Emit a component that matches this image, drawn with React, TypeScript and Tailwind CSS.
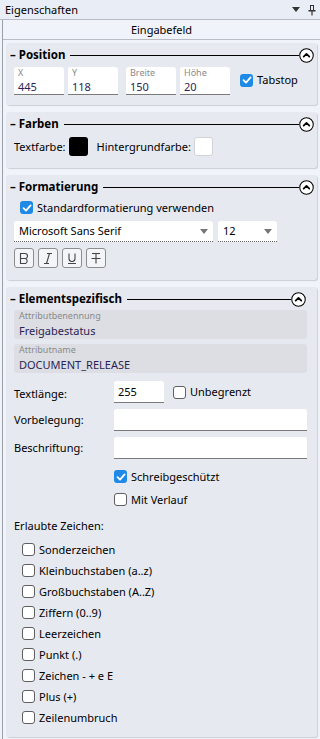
import React from 'react';

const font = "font-['Noto_Sans','Segoe_UI',sans-serif]";

function Check({ checked }: { checked?: boolean }) {
  if (checked) {
    return (
      <span className="w-[13px] h-[13px] rounded-[3px] bg-[#1e8ae6] flex items-center justify-center shrink-0">
        <svg width="10" height="10" viewBox="0 0 10 10">
          <path d="M1.5 5.2 L4 7.6 L8.6 2.4" fill="none" stroke="#fff" strokeWidth="1.8" strokeLinecap="round" strokeLinejoin="round" />
        </svg>
      </span>
    );
  }
  return <span className="w-[13px] h-[13px] rounded-[3px] border-[1.5px] border-[#5f5f5f] bg-white shrink-0" />;
}

function CheckRow({ label, checked, className }: { label: string; checked?: boolean; className?: string }) {
  return (
    <div className={`flex items-center h-[17px] gap-[4px] ${className ?? ''}`}>
      <Check checked={checked} />
      <span>{label}</span>
    </div>
  );
}

function Collapse() {
  return (
    <svg width="15" height="15" viewBox="0 0 16 16" className="shrink-0 mr-[1px]">
      <circle cx="8" cy="8" r="7.2" fill="#fff" stroke="#000" strokeWidth="1.1" />
      <path d="M5 9.3 L8 6.3 L11 9.3" fill="none" stroke="#000" strokeWidth="1.8" strokeLinecap="round" strokeLinejoin="round" />
    </svg>
  );
}

function SectionTitle({ title }: { title: string }) {
  return (
    <div className="flex items-center h-[18px]">
      <span className="font-bold text-[11.5px] mr-[5px]">– {title}</span>
      <span className="flex-1 h-px bg-black" />
      <Collapse />
    </div>
  );
}

function Section({ title, children, className }: { title: string; children: React.ReactNode; className?: string }) {
  return (
    <section className={`bg-[#e6e9f0] rounded-[3px] shadow-[1px_1px_1px_rgba(0,0,0,0.15)] pl-[4px] pr-[2px] pt-[3px] ${className ?? ''}`}>
      <SectionTitle title={title} />
      {children}
    </section>
  );
}

function NumField({ label, value }: { label: string; value: string }) {
  return (
    <div className="w-[50px] h-[28px] bg-white rounded-t-[3px] border-b border-[#7a7a7a] px-[4px]">
      <div className="text-[9px] leading-[12px] text-[#8a8a8a]">{label}</div>
      <div className="text-[11px] leading-[14px] mt-[1px] text-[#2b1f55]">{value}</div>
    </div>
  );
}

function AttrBox({ label, value, className }: { label: string; value: string; className?: string }) {
  return (
    <div className={`h-[29px] bg-[#dcdee4] rounded-[3px] px-[5px] ${className ?? ''}`}>
      <div className="text-[9px] leading-[12px] text-[#8a8a8a]">{label}</div>
      <div className="text-[11px] leading-[14px] mt-[2px] text-[#2b1f55]">{value}</div>
    </div>
  );
}

const erlaubt = [
  'Sonderzeichen',
  'Kleinbuchstaben (a..z)',
  'Großbuchstaben (A..Z)',
  'Ziffern (0..9)',
  'Leerzeichen',
  'Punkt (.)',
  'Zeichen - + e E',
  'Plus (+)',
  'Zeilenumbruch',
];

export default function App(): React.JSX.Element {
  return (
    <div className={`w-[320px] h-[739px] overflow-hidden bg-[#f0f3f9] text-[11px] leading-[14px] text-black ${font}`}>
      <div className="h-[20px] flex items-center justify-between bg-[#e9edf5] border-b border-[#b9bcc4] pl-[5px] pr-[4px]">
        <span className="text-[11px]">Eigenschaften</span>
        <div className="flex items-center gap-[8px]">
          <svg width="8" height="6" viewBox="0 0 8 6">
            <path d="M0 0 H8 L4 5 Z" fill="#333" />
          </svg>
          <svg width="8" height="12" viewBox="0 0 8 12">
            <path d="M2 1 H6 V6 H7.5 V7.5 H4.6 V11.5 H3.4 V7.5 H0.5 V6 H2 Z M3 2 V6 H5 V2 Z" fill="#333" />
          </svg>
        </div>
      </div>
      <div className="h-[719px] border-l border-[#9aa0a8] ml-[2px] flex flex-col">
        <div className="h-[20px] shrink-0 border-b border-[#b9bcc4] flex items-center justify-center">Eingabefeld</div>
        <div className="flex flex-col gap-[7px] pl-[3px] pr-[3px] pt-[3px]">
          <Section title="Position" className="h-[62px]">
            <div className="flex items-center mt-[3px] pl-[4px]">
              <NumField label="X" value="445" />
              <div className="w-[4px]" />
              <NumField label="Y" value="118" />
              <div className="w-[8px]" />
              <NumField label="Breite" value="150" />
              <div className="w-[4px]" />
              <NumField label="Höhe" value="20" />
              <CheckRow label="Tabstop" checked className="ml-[10px] mt-[-2px]" />
            </div>
          </Section>

          <Section title="Farben" className="h-[56px]">
            <div className="flex items-center mt-[4px] pl-[4px]">
              <span>Textfarbe:</span>
              <span className="w-[19px] h-[19px] bg-black rounded-[3px] ml-[3px]" />
              <span className="ml-[9px]">Hintergrundfarbe:</span>
              <span className="w-[19px] h-[19px] bg-white rounded-[3px] border border-[#d0d3da] ml-[3px]" />
            </div>
          </Section>

          <Section title="Formatierung" className="h-[105px]">
            <CheckRow label="Standardformatierung verwenden" checked className="mt-[3px] ml-[10px]" />
            <div className="flex mt-[5px] pl-[4px] gap-[5px]">
              <div className="w-[199px] h-[21px] bg-white rounded-t-[3px] border-b border-dotted border-[#666] flex items-center justify-between px-[5px]">
                <span>Microsoft Sans Serif</span>
                <svg width="8" height="5" viewBox="0 0 8 5"><path d="M0 0 H8 L4 5 Z" fill="#777" /></svg>
              </div>
              <div className="w-[59px] h-[21px] bg-white rounded-t-[3px] border-b border-dotted border-[#666] flex items-center justify-between px-[5px]">
                <span>12</span>
                <svg width="8" height="5" viewBox="0 0 8 5"><path d="M0 0 H8 L4 5 Z" fill="#777" /></svg>
              </div>
            </div>
            <div className="flex gap-[4px] mt-[6px] pl-[4px]">
              {['B', 'I', 'U', 'T'].map((k) => (
                <div key={k} className="w-[20px] h-[20px] rounded-[3px] border border-[#8c8c8c] bg-[#f4f5f8] flex items-center justify-center">
                  {k === 'B' && (
                    <svg width="12" height="13" viewBox="0 0 12 13"><path d="M2.5 1.5 H7 A2.5 2.5 0 0 1 7 6.5 H2.5 Z M2.5 6.5 H7.5 A2.7 2.7 0 0 1 7.5 11.5 H2.5 Z" fill="none" stroke="#444" strokeWidth="1.1" /></svg>
                  )}
                  {k === 'I' && (
                    <svg width="12" height="13" viewBox="0 0 12 13"><path d="M5 1.5 H10 M2 11.5 H7 M7.5 1.5 L4.5 11.5" fill="none" stroke="#444" strokeWidth="1.1" /></svg>
                  )}
                  {k === 'U' && (
                    <svg width="12" height="13" viewBox="0 0 12 13"><path d="M3 1.5 V6.5 A3 3 0 0 0 9 6.5 V1.5 M2 11.5 H10" fill="none" stroke="#444" strokeWidth="1.1" /></svg>
                  )}
                  {k === 'T' && (
                    <svg width="12" height="13" viewBox="0 0 12 13"><path d="M2 1.5 H10 M6 1.5 V11.5 M1.5 6.5 H10.5" fill="none" stroke="#444" strokeWidth="1.1" /></svg>
                  )}
                </div>
              ))}
            </div>
          </Section>

          <Section title="Elementspezifisch" className="h-[450px] pr-[10px]">
            <AttrBox label="Attributbenennung" value="Freigabestatus" className="mt-[2px] ml-[4px]" />
            <AttrBox label="Attributname" value="DOCUMENT_RELEASE" className="mt-[5px] ml-[4px]" />
            <div className="flex items-center mt-[8px] ml-[4px]">
              <span className="w-[100px] mt-[4px]">Textlänge:</span>
              <div className="w-[50px] h-[22px] bg-white rounded-t-[3px] border-b border-[#7a7a7a] px-[4px] flex items-center">255</div>
              <CheckRow label="Unbegrenzt" className="ml-[9px]" />
            </div>
            <div className="flex items-center mt-[6px] ml-[4px]">
              <span className="w-[100px]">Vorbelegung:</span>
              <div className="flex-1 h-[22px] bg-white rounded-t-[3px] border-b border-[#7a7a7a]" />
            </div>
            <div className="flex items-center mt-[6px] ml-[4px]">
              <span className="w-[100px]">Beschriftung:</span>
              <div className="flex-1 h-[22px] bg-white rounded-t-[3px] border-b border-[#7a7a7a]" />
            </div>
            <CheckRow label="Schreibgeschützt" checked className="ml-[104px] mt-[9px]" />
            <CheckRow label="Mit Verlauf" className="ml-[104px] mt-[6px]" />
            <div className="mt-[9px] ml-[4px] h-[17px] flex items-center">Erlaubte Zeichen:</div>
            <div className="flex flex-col gap-[4px] mt-[7px] ml-[12px]">
              {erlaubt.map((e) => (
                <CheckRow key={e} label={e} />
              ))}
            </div>
          </Section>
        </div>
      </div>
    </div>
  );
}
